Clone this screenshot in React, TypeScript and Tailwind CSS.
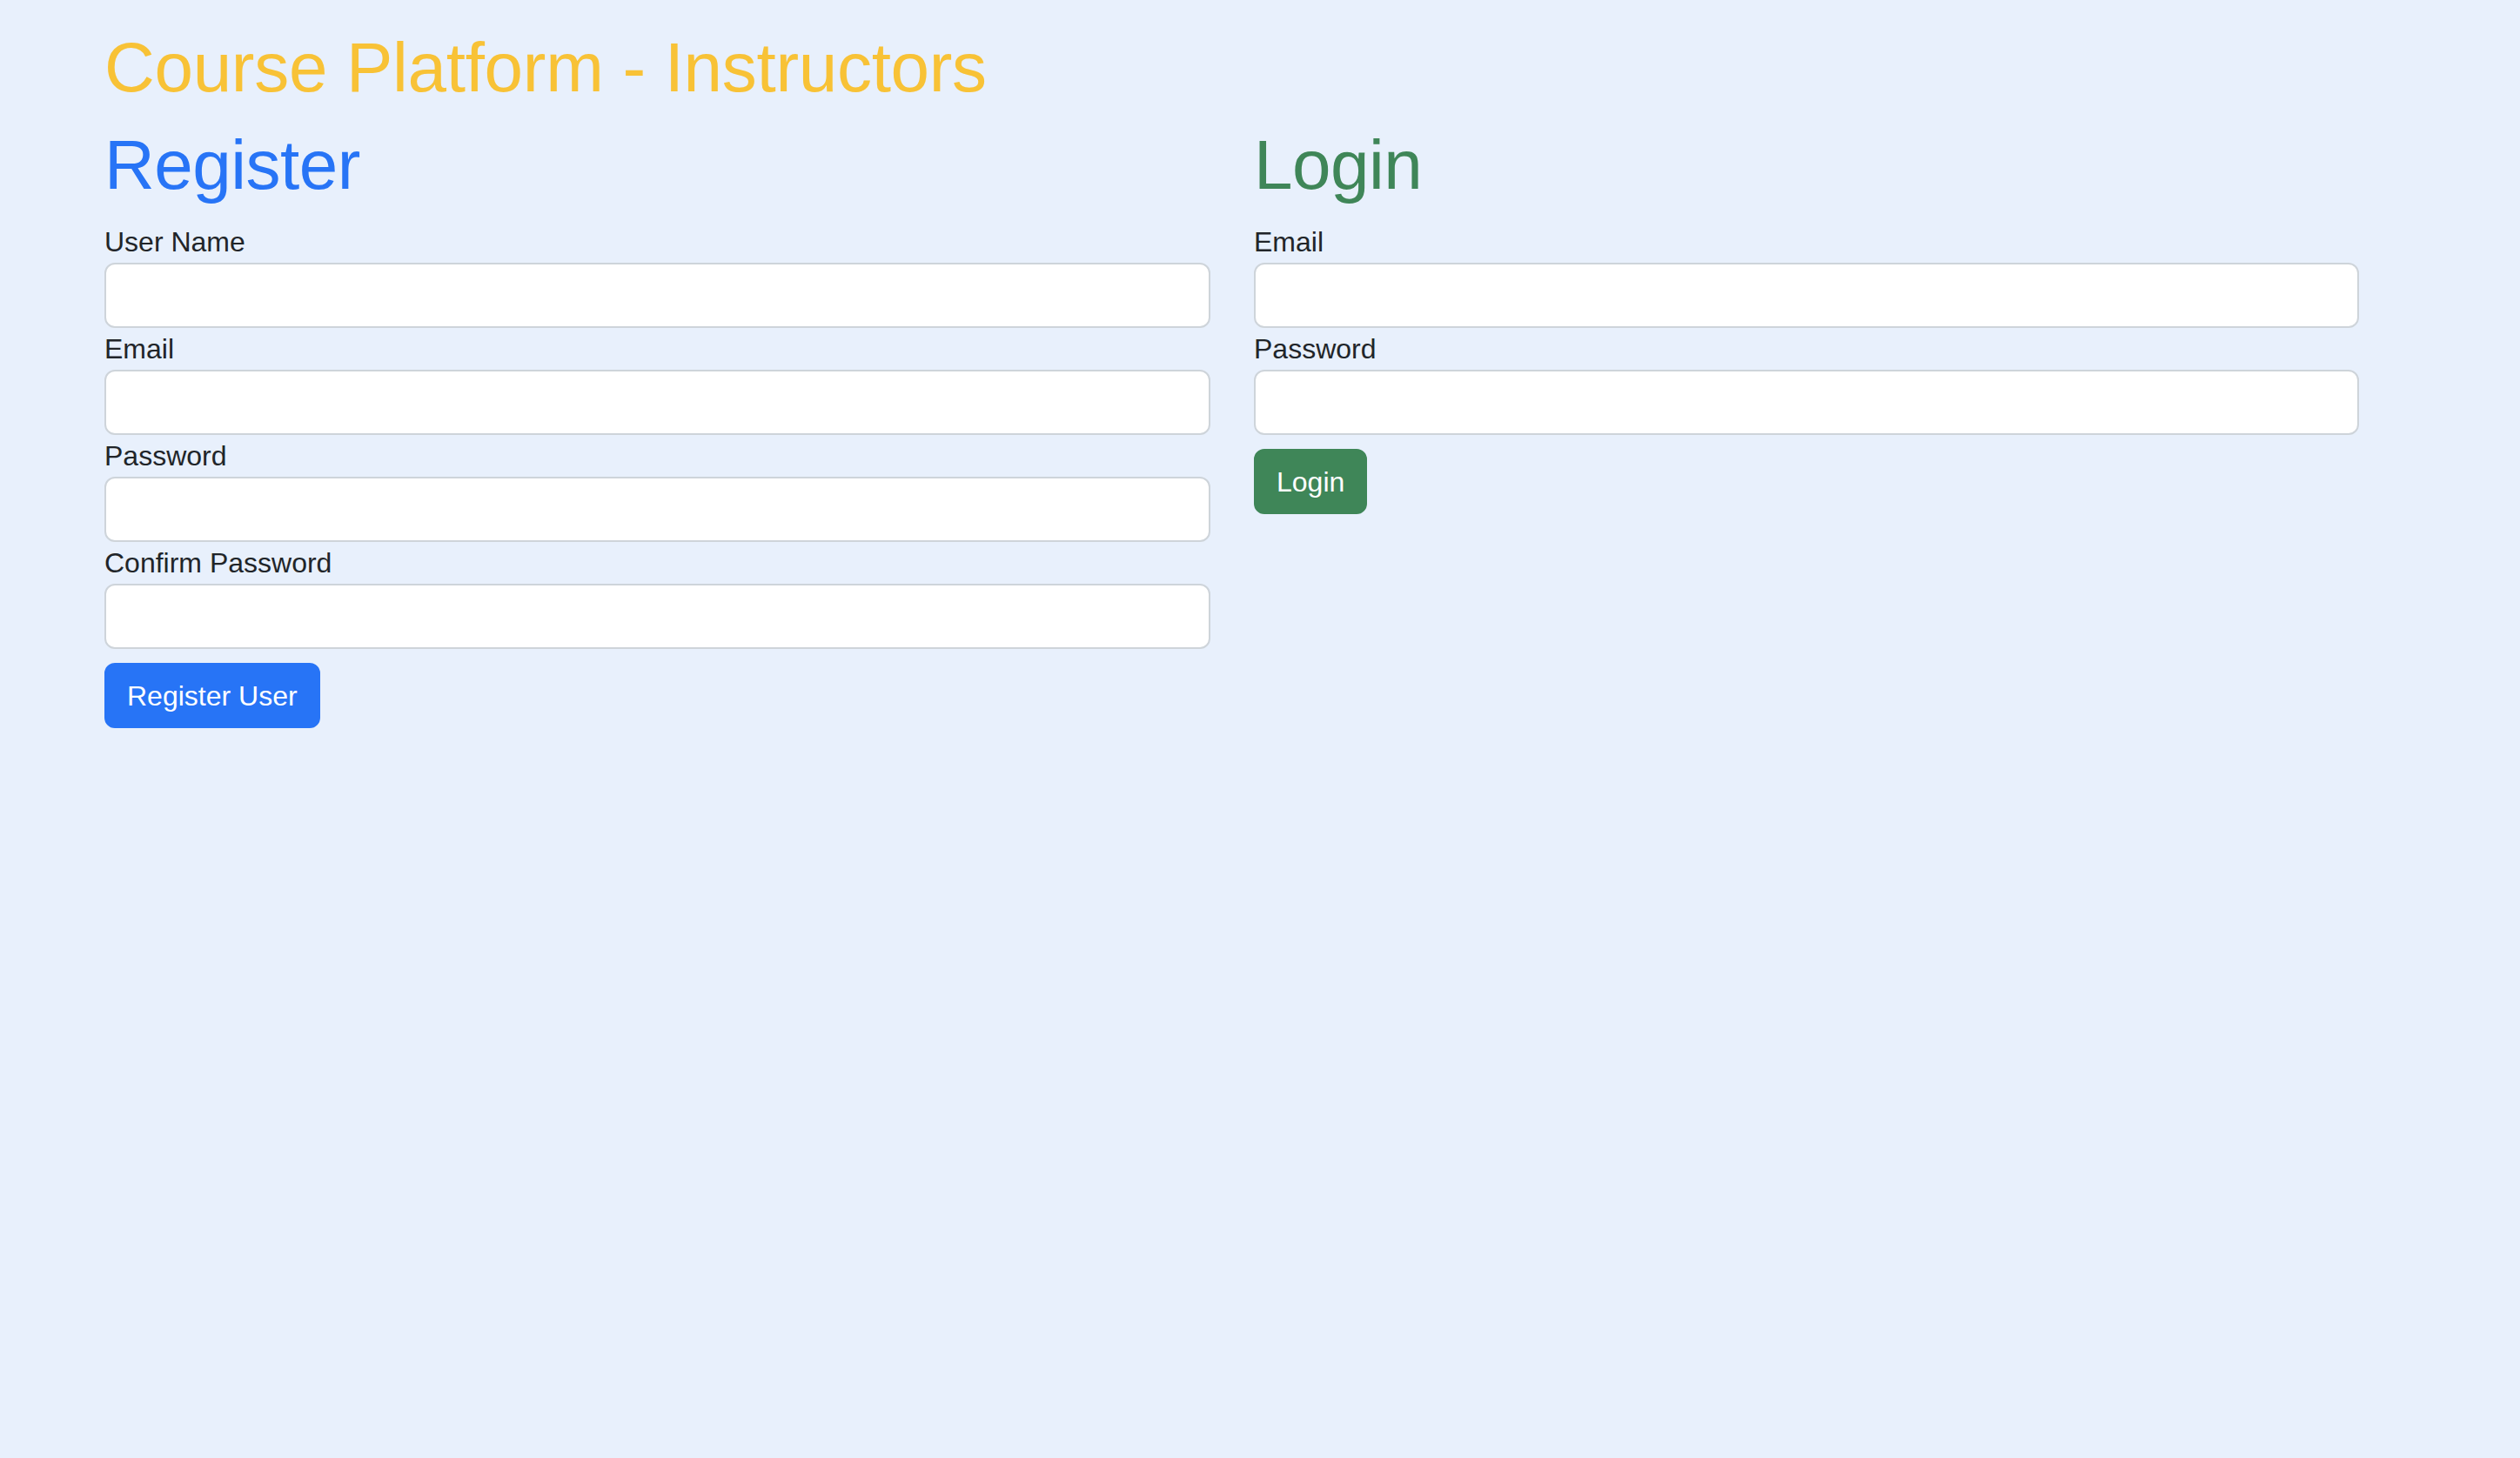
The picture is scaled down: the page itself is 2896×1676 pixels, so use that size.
import { useState } from 'react';

const font = { fontFamily: '"Liberation Sans", Arial, sans-serif' };

type FieldProps = {
  id: string;
  label: string;
  type?: string;
  value: string;
  onChange: (v: string) => void;
};

const Field = ({ id, label, type = 'text', value, onChange }: FieldProps) => (
  <div>
    <label htmlFor={id} className="block text-[32px] leading-[48px] text-[#212529]">
      {label}
    </label>
    <input
      id={id}
      type={type}
      value={value}
      onChange={(e) => onChange(e.target.value)}
      className="block w-full h-[75px] bg-white border-2 border-[#ced4da] rounded-[12px] px-[24px] text-[32px] text-[#212529] focus:outline-none"
    />
  </div>
);

export default function App() {
  const [userName, setUserName] = useState('');
  const [regEmail, setRegEmail] = useState('');
  const [regPassword, setRegPassword] = useState('');
  const [confirmPassword, setConfirmPassword] = useState('');
  const [loginEmail, setLoginEmail] = useState('');
  const [loginPassword, setLoginPassword] = useState('');

  return (
    <div className="min-h-screen bg-[#e8f0fc] pl-[120px] pt-[30px]" style={font}>
      <h1 className="text-[80px] leading-[96px] font-medium tracking-[-0.3px] text-[#f8c236] mb-[16px]">
        Course Platform - Instructors
      </h1>

      <div className="grid grid-cols-[1271px_1270px] gap-x-[50px]">
        {/* 회원가입 */}
        <div>
          <h1 className="text-[80px] leading-[96px] font-medium tracking-[-0.5px] text-[#2774f6] mb-[16px]">Register</h1>
          <form onSubmit={(e) => e.preventDefault()}>
            <Field id="userName" label="User Name" value={userName} onChange={setUserName} />
            <Field id="regEmail" label="Email" type="email" value={regEmail} onChange={setRegEmail} />
            <Field id="regPassword" label="Password" type="password" value={regPassword} onChange={setRegPassword} />
            <Field
              id="confirmPassword"
              label="Confirm Password"
              type="password"
              value={confirmPassword}
              onChange={setConfirmPassword}
            />
            <button
              type="submit"
              className="mt-[16px] h-[75px] px-[24px] rounded-[12px] bg-[#2774f6] border-2 border-[#2774f6] text-white text-[32px] leading-[48px]"
            >
              Register User
            </button>
          </form>
        </div>

        {/* 로그인 */}
        <div>
          <h1 className="text-[80px] leading-[96px] font-medium tracking-[-0.5px] text-[#3f8658] mb-[16px]">Login</h1>
          <form onSubmit={(e) => e.preventDefault()}>
            <Field id="loginEmail" label="Email" type="email" value={loginEmail} onChange={setLoginEmail} />
            <Field
              id="loginPassword"
              label="Password"
              type="password"
              value={loginPassword}
              onChange={setLoginPassword}
            />
            <button
              type="submit"
              className="mt-[16px] h-[75px] px-[24px] rounded-[12px] bg-[#3f8658] border-2 border-[#3f8658] text-white text-[32px] leading-[48px]"
            >
              Login
            </button>
          </form>
        </div>
      </div>
    </div>
  );
}
